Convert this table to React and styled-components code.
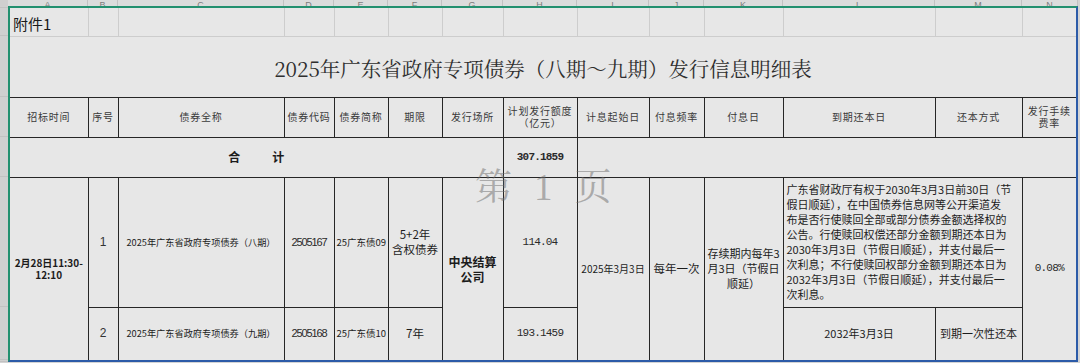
import React from 'react';
import styled, { createGlobalStyle } from 'styled-components';

const GlobalStyle = createGlobalStyle`
  html, body { margin: 0; padding: 0; background: #d4d4d4; }
  body {
    width: 1080px;
    height: 363px;
    overflow: hidden;
    font-family: "Noto Sans CJK SC", "Noto Sans", sans-serif;
  }
`;

const COLUMNS = [
  { key: 'A', w: 78 }, { key: 'B', w: 30 }, { key: 'C', w: 166 }, { key: 'D', w: 50 },
  { key: 'E', w: 54 }, { key: 'F', w: 54 }, { key: 'G', w: 61 }, { key: 'H', w: 74 },
  { key: 'I', w: 72 }, { key: 'J', w: 55 }, { key: 'K', w: 79 }, { key: 'L', w: 152 },
  { key: 'M', w: 87 }, { key: 'N', w: 54 },
];

const ROW_HEIGHTS = [2, 28, 61, 40, 40, 130, 53, 2];

const Sheet = styled.div`
  display: grid;
  grid-template-columns: 8px 1070px;
  grid-template-rows: 6px 356px;
  background: #d4d4d4;
`;

const Corner = styled.div`
  background: #cfcfcf;
`;

const ColumnStrip = styled.div`
  display: flex;
  height: 6px;
  overflow: hidden;
  background: #dcdcdc;
`;

const ColumnLetter = styled.div`
  flex: 0 0 ${p => p.$w}px;
  box-sizing: border-box;
  display: flex;
  align-items: flex-end;
  justify-content: center;
  border-right: 1px solid #c2c2c2;
  font-family: "Liberation Sans", sans-serif;
  font-size: 9px;
  line-height: 9px;
  color: #7c7c7c;
  span { margin-bottom: -4px; }
`;

const RowStrip = styled.div`
  display: flex;
  flex-direction: column;
  background: #d0d0d0;
`;

const RowMark = styled.div`
  flex: 0 0 ${p => p.$h}px;
  box-sizing: border-box;
  border-bottom: 1px solid #c2c2c2;
`;

const Page = styled.div`
  position: relative;
  border-top: 2px solid #23906f;
  border-left: 2px solid #23906f;
  border-right: 2px solid #2c5ba8;
  border-bottom: 2px solid #2c5ba8;
  background: #e7e7e7;
  overflow: hidden;
`;

const Grid = styled.table`
  border-collapse: collapse;
  border-style: hidden;
  table-layout: fixed;
  width: 1066px;
  background: #e7e7e7;
`;

const Row = styled.tr`
  height: ${p => p.$h}px;
`;

const Cell = styled.td`
  border: 1px solid #262626;
  padding: 0 2px;
  text-align: center;
  vertical-align: middle;
  font-family: "Noto Sans CJK SC", sans-serif;
  font-size: ${p => p.$size || 10}px;
  line-height: ${p => p.$lh || 15}px;
  font-weight: ${p => (p.$bold ? 700 : 400)};
  color: #1c1c1c;
  white-space: nowrap;
  overflow: hidden;
`;

const SoftCell = styled(Cell)`
  border-color: #cdcdcd;
  text-align: left;
  padding: 3px 0 0 3px;
  font-size: 15px;
  color: #1a1a1a;
`;

const TitleCell = styled(Cell)`
  border-top-color: #cdcdcd;
  padding-top: 3px;
  font-family: "Noto Serif CJK SC", "Noto Sans CJK SC", serif;
  font-size: 20.5px;
  line-height: 24px;
  color: #2e2e2e;
`;

const HeadCell = styled.th`
  border: 1px solid #262626;
  padding: 0 2px;
  font-family: "Noto Sans CJK SC", sans-serif;
  font-size: 10px;
  line-height: 12px;
  letter-spacing: 0.8px;
  font-weight: 400;
  color: #3a3a3a;
  text-align: center;
  vertical-align: middle;
  white-space: nowrap;
`;

const NumCell = styled(Cell)`
  font-family: ${p => (p.$tight ? '"Liberation Sans", sans-serif' : '"Liberation Mono", "DejaVu Sans Mono", monospace')};
  font-size: 11px;
  letter-spacing: ${p => (p.$tight ? -1.1 : -0.8)}px;
  color: #2a2a2a;
`;

const NoteCell = styled(Cell)`
  text-align: left;
  padding: 0 0 0 3px;
  font-size: 11px;
  line-height: 15px;
`;

const TimeCell = styled(Cell)`
  font-weight: 700;
  font-size: 10px;
  line-height: 12px;
`;

const IndexCell = styled(Cell)`
  font-family: "Liberation Sans", sans-serif;
  font-size: 12px;
  color: #333;
`;

const TotalLabel = styled.span`
  display: inline-flex;
  gap: 32px;
  font-size: 12px;
  font-weight: 700;
`;

const Watermark = styled.div`
  position: absolute;
  left: 465px;
  top: 158px;
  display: flex;
  align-items: baseline;
  gap: 22px;
  font-family: "Noto Serif CJK SC", "Noto Sans CJK SC", serif;
  font-size: 37px;
  line-height: 1;
  color: rgba(110, 110, 110, 0.5);
  pointer-events: none;
`;

const WatermarkDigit = styled.span`
  font-family: "Liberation Serif", serif;
`;

const NOTE_LINES = [
  '广东省财政厅有权于2030年3月3日前30日（节',
  '假日顺延），在中国债券信息网等公开渠道发',
  '布是否行使赎回全部或部分债券金额选择权的',
  '公告。行使赎回权偿还部分金额到期还本日为',
  '2030年3月3日（节假日顺延），并支付最后一',
  '次利息；不行使赎回权部分金额到期还本日为',
  '2032年3月3日（节假日顺延），并支付最后一',
  '次利息。',
];

const HEADERS = [
  ['招标时间'], ['序号'], ['债券全称'], ['债券代码'], ['债券简称'], ['期限'], ['发行场所'],
  ['计划发行额度', '（亿元）'], ['计息起始日'], ['付息频率'], ['付息日'], ['到期还本日'],
  ['还本方式'], ['发行手续', '费率'],
];

const Lines = ({ lines }) =>
  lines.map((l, i) => (
    <React.Fragment key={i}>
      {i > 0 && <br />}
      {l}
    </React.Fragment>
  ));

export default function App() {
  return (
    <>
      <GlobalStyle />
      <Sheet>
        <Corner />
        <ColumnStrip>
          {COLUMNS.map((c, i) => (
            <ColumnLetter key={c.key} $w={c.w + (i === 0 || i === COLUMNS.length - 1 ? 2 : 0)}>
              <span>{c.key}</span>
            </ColumnLetter>
          ))}
        </ColumnStrip>
        <RowStrip>
          {ROW_HEIGHTS.map((h, i) => (
            <RowMark key={i} $h={h} />
          ))}
        </RowStrip>
        <Page>
          <Grid>
            <colgroup>
              {COLUMNS.map(c => (
                <col key={c.key} style={{ width: c.w }} />
              ))}
            </colgroup>
            <tbody>
              <Row $h={28}>
                <SoftCell>附件1</SoftCell>
                {COLUMNS.slice(1).map(c => (
                  <SoftCell key={c.key} />
                ))}
              </Row>
              <Row $h={61}>
                <TitleCell colSpan={14}>2025年广东省政府专项债券（八期～九期）发行信息明细表</TitleCell>
              </Row>
              <Row $h={40}>
                {HEADERS.map((h, i) => (
                  <HeadCell key={i}>
                    <Lines lines={h} />
                  </HeadCell>
                ))}
              </Row>
              <Row $h={40}>
                <Cell colSpan={7}>
                  <TotalLabel>
                    <span>合</span>
                    <span>计</span>
                  </TotalLabel>
                </Cell>
                <NumCell $bold>307.1859</NumCell>
                <Cell colSpan={6} />
              </Row>
              <Row $h={130}>
                <TimeCell rowSpan={2}>
                  <Lines lines={['2月28日11:30-', '12:10']} />
                </TimeCell>
                <IndexCell>1</IndexCell>
                <Cell $size={9.2}>2025年广东省政府专项债券（八期）</Cell>
                <NumCell $tight>2505167</NumCell>
                <Cell $size={9.5}>25广东债09</Cell>
                <Cell $size={11.5}>
                  <Lines lines={['5+2年', '含权债券']} />
                </Cell>
                <Cell rowSpan={2} $bold $size={12}>
                  <Lines lines={['中央结算', '公司']} />
                </Cell>
                <NumCell>114.04</NumCell>
                <Cell rowSpan={2}>2025年3月3日</Cell>
                <Cell rowSpan={2} $size={11.5}>每年一次</Cell>
                <Cell rowSpan={2} $size={11}>
                  <Lines lines={['存续期内每年3', '月3日（节假日', '顺延）']} />
                </Cell>
                <NoteCell colSpan={2}>
                  <Lines lines={NOTE_LINES} />
                </NoteCell>
                <NumCell rowSpan={2}>0.08%</NumCell>
              </Row>
              <Row $h={53}>
                <IndexCell>2</IndexCell>
                <Cell $size={9.2}>2025年广东省政府专项债券（九期）</Cell>
                <NumCell $tight>2505168</NumCell>
                <Cell $size={9.5}>25广东债10</Cell>
                <Cell $size={11.5}>7年</Cell>
                <NumCell>193.1459</NumCell>
                <Cell $size={11}>2032年3月3日</Cell>
                <Cell $size={11}>到期一次性还本</Cell>
              </Row>
            </tbody>
          </Grid>
          <Watermark>
            <span>第</span>
            <WatermarkDigit>1</WatermarkDigit>
            <span>页</span>
          </Watermark>
        </Page>
      </Sheet>
    </>
  );
}
